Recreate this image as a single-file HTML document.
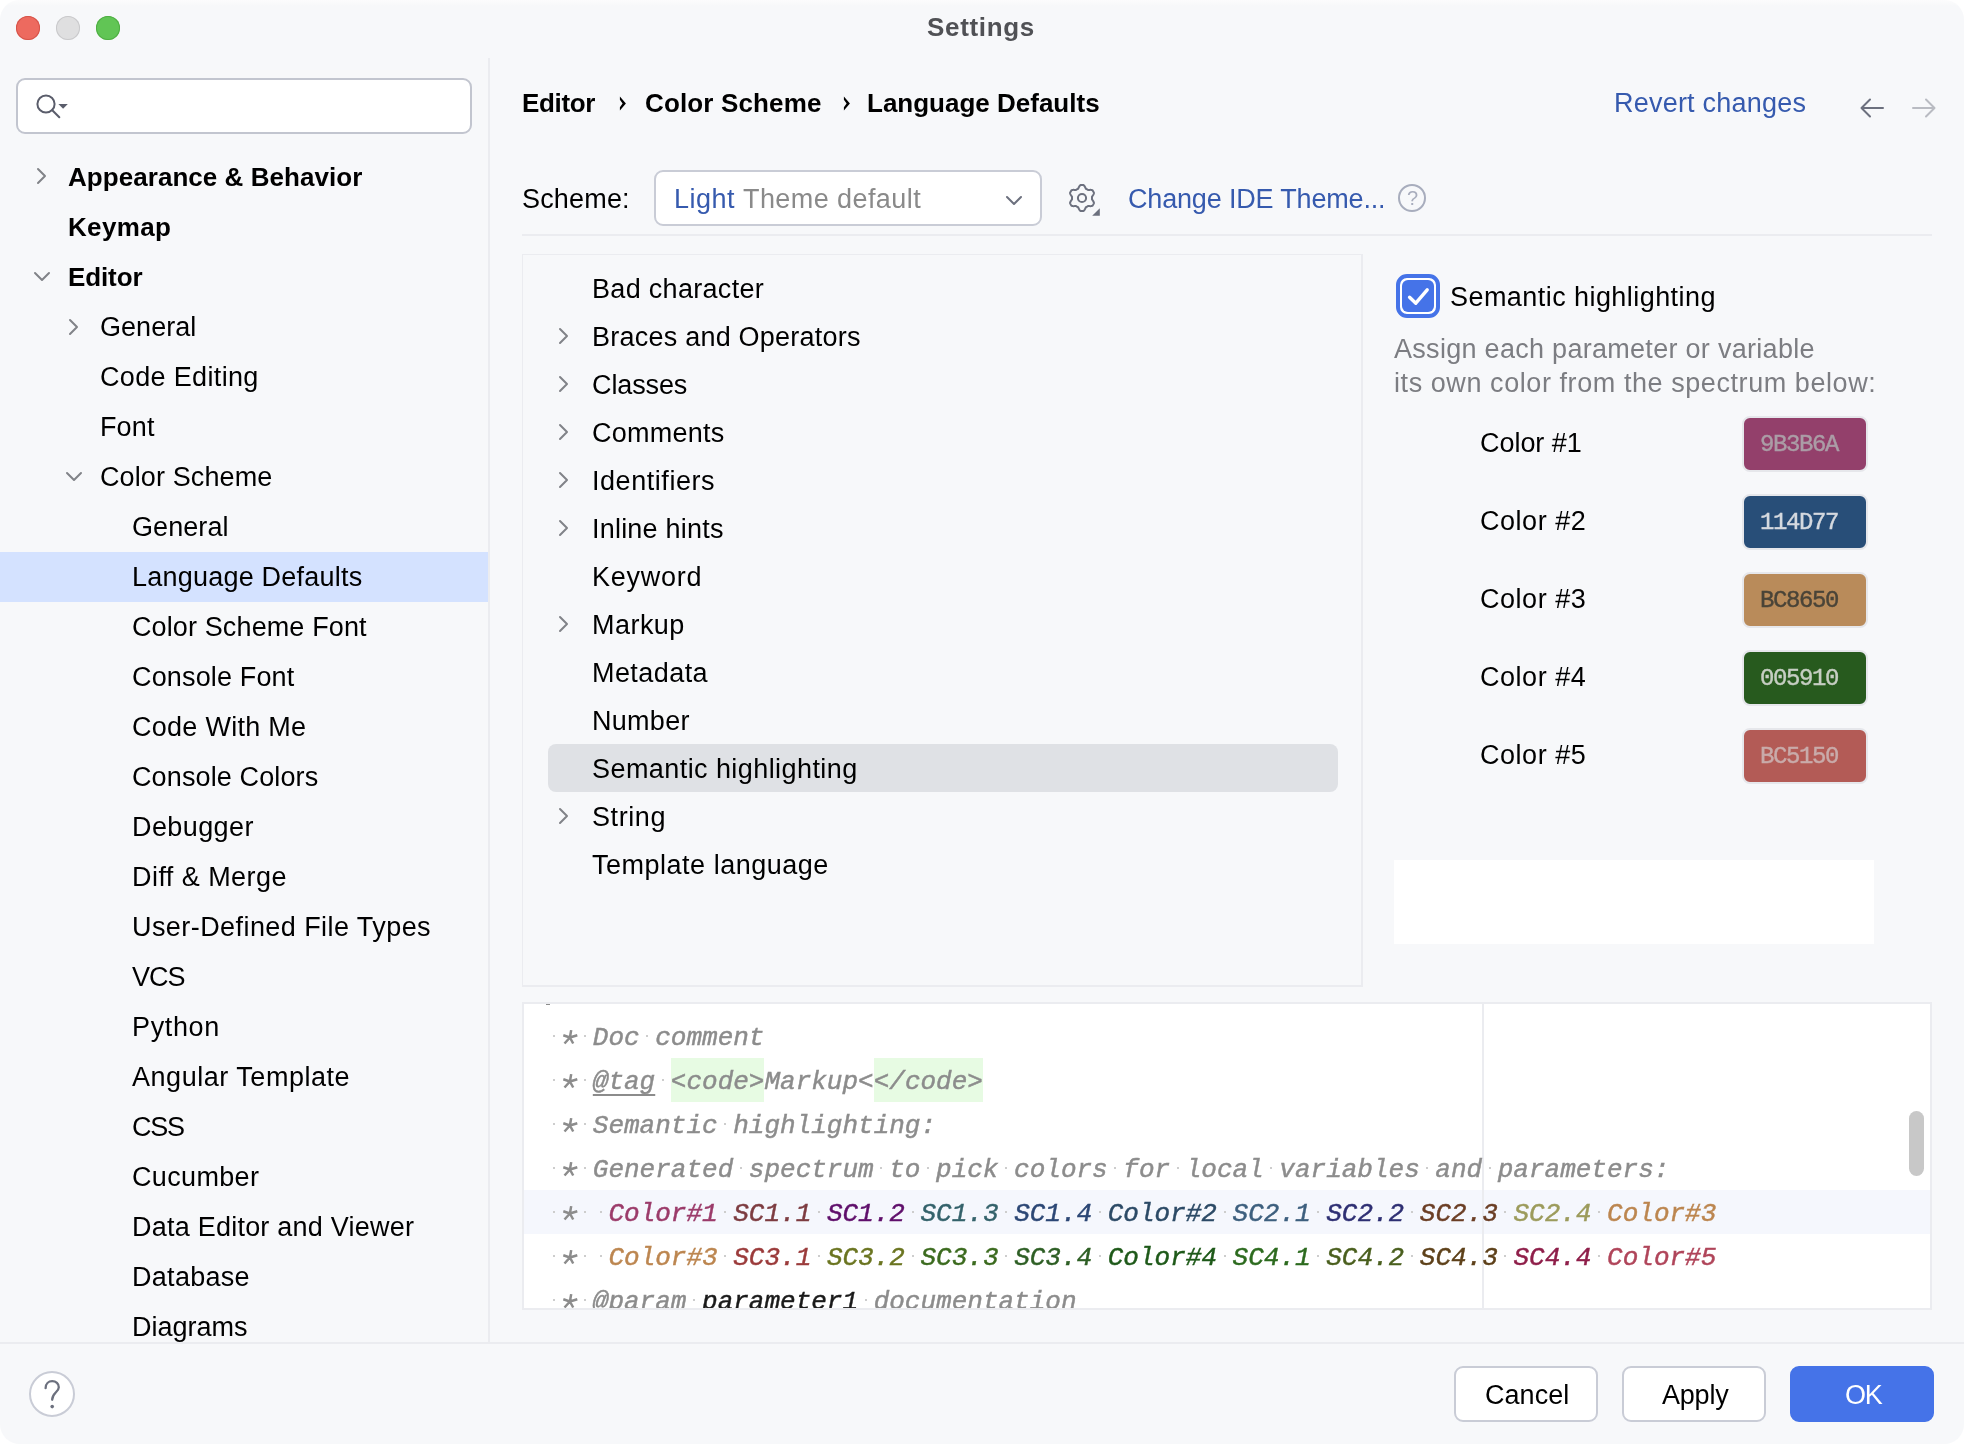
<!DOCTYPE html><html><head><meta charset='utf-8'><title>Settings</title><style>
html,body{margin:0;padding:0;background:#fff;}
body{width:1964px;height:1444px;overflow:hidden;position:relative;font-family:"Liberation Sans", sans-serif;}
#win{position:absolute;left:0;top:0;width:1964px;height:1444px;background:linear-gradient(#FCFCFD 0px,#F7F8FA 6px) #F7F8FA;border-radius:20px;overflow:hidden;}
.a{position:absolute;}
.t{position:absolute;white-space:pre;will-change:transform;line-height:32px;font-family:"Liberation Sans", sans-serif;color:#000;}
.hl{background:#EBECF0;}
svg{position:absolute;overflow:visible;}
.btn{position:absolute;box-sizing:border-box;height:56px;width:144px;top:1366px;border:2px solid #C9CCD6;border-radius:9px;background:#fff;}
.sw{position:absolute;box-sizing:border-box;left:1742px;width:126px;height:56px;border:2px solid #E6E7EB;border-radius:8px;}
.sw span{will-change:transform;position:absolute;left:15.5px;top:1px;line-height:52px;font-family:"Liberation Mono", monospace;font-size:24px;white-space:pre;letter-spacing:-1.4px;-webkit-text-stroke:0.4px currentColor;}
#code{position:absolute;left:524px;top:1004px;width:1406px;height:304px;overflow:hidden;background:#fff;}
.ln{will-change:transform;position:absolute;left:22px;height:44px;line-height:48px;-webkit-text-stroke:0.45px currentColor;white-space:pre;font-family:"Liberation Mono", monospace;font-style:italic;font-size:26px;color:#8C8C8C;}
.ws{position:absolute;width:2px;height:2px;background:#CDCDCD;}
</style></head><body><div id='win'>
<div class='a' style='left:16px;top:16px;width:24px;height:24px;border-radius:50%;background:#ED6A5F;box-shadow:inset 0 0 0 1px #D5544A'></div>
<div class='a' style='left:56px;top:16px;width:24px;height:24px;border-radius:50%;background:#DFDFE0;box-shadow:inset 0 0 0 1px #C9C9CB'></div>
<div class='a' style='left:96px;top:16px;width:24px;height:24px;border-radius:50%;background:#61C555;box-shadow:inset 0 0 0 1px #4FAE43'></div>
<div class='a' style='left:16px;top:78px;width:456px;height:56px;box-sizing:border-box;border:2px solid #C2C5CF;border-radius:9px;background:#fff'></div>
<svg style='left:34px;top:92px' width='36' height='28' viewBox='34 92 36 28'><circle cx='46' cy='104' r='8.6' fill='none' stroke='#5A5D6B' stroke-width='2'/><path d='M52.3 110.3 L59.3 117.3' stroke='#5A5D6B' stroke-width='2' stroke-linecap='round'/><path d='M58.4 104 L67.8 104 L63.1 108.8 Z' fill='#5A5D6B'/></svg>
<div class='a' style='left:0;top:552px;width:488px;height:50px;background:#D4E2FF'></div>
<div class='a hl' style='left:488px;top:58px;width:2px;height:1284px'></div>
<svg class='a' style='left:37.0px;top:168.0px' width='9' height='16' viewBox='0 0 9 16'><path d='M1 1 L8 8 L1 15' fill='none' stroke='#818388' stroke-width='2' stroke-linecap='round' stroke-linejoin='round'/></svg>
<svg class='a' style='left:34.0px;top:271.5px' width='16' height='9' viewBox='0 0 16 9'><path d='M1 1 L8 8 L15 1' fill='none' stroke='#818388' stroke-width='2' stroke-linecap='round' stroke-linejoin='round'/></svg>
<svg class='a' style='left:69.0px;top:318.5px' width='9' height='16' viewBox='0 0 9 16'><path d='M1 1 L8 8 L1 15' fill='none' stroke='#818388' stroke-width='2' stroke-linecap='round' stroke-linejoin='round'/></svg>
<svg class='a' style='left:66.0px;top:471.5px' width='16' height='9' viewBox='0 0 16 9'><path d='M1 1 L8 8 L15 1' fill='none' stroke='#818388' stroke-width='2' stroke-linecap='round' stroke-linejoin='round'/></svg>
<svg style='left:610px;top:90px' width='24' height='28' viewBox='610 90 24 28'><path d='M619.9 96.4 L625.9 103.5 L619.9 110.6 L619.9 107.3 L622.6 103.5 L619.9 99.7 Z' fill='#000'/></svg>
<svg style='left:834px;top:90px' width='24' height='28' viewBox='834 90 24 28'><path d='M843.9 96.4 L849.9 103.5 L843.9 110.6 L843.9 107.3 L846.6 103.5 L843.9 99.7 Z' fill='#000'/></svg>
<svg style='left:1860px;top:98px' width='24' height='20' viewBox='0 0 24 20'><path d='M23 10 H2 M10 1.5 L1.5 10 L10 18.5' fill='none' stroke='#6C707E' stroke-width='2' stroke-linecap='round' stroke-linejoin='round'/></svg>
<svg style='left:1912px;top:98px' width='24' height='20' viewBox='0 0 24 20'><path d='M1 10 H22 M14 1.5 L22.5 10 L14 18.5' fill='none' stroke='#B9BBC2' stroke-width='2' stroke-linecap='round' stroke-linejoin='round'/></svg>
<div class='a' style='left:654px;top:170px;width:388px;height:56px;box-sizing:border-box;border:2px solid #C9CCD6;border-radius:9px;background:#fff'></div>
<svg class='a' style='left:1006.0px;top:196.0px' width='16' height='9' viewBox='0 0 16 9'><path d='M1 1 L8 8 L15 1' fill='none' stroke='#6C707E' stroke-width='2' stroke-linecap='round' stroke-linejoin='round'/></svg>
<svg style='left:1066px;top:182px' width='36' height='36' viewBox='1066 182 36 36'><path d='M1092.00 198.00 L1092.00 198.26 L1091.99 198.52 L1091.97 198.78 L1091.95 199.05 L1091.98 199.31 L1092.18 199.61 L1092.40 199.93 L1092.64 200.26 L1092.87 200.61 L1093.11 200.98 L1093.33 201.36 L1093.53 201.75 L1093.71 202.15 L1093.85 202.55 L1093.95 202.95 L1093.88 203.29 L1093.73 203.60 L1093.58 203.90 L1093.42 204.20 L1093.26 204.50 L1093.08 204.79 L1092.90 205.08 L1092.71 205.36 L1092.52 205.64 L1092.26 205.87 L1091.86 205.99 L1091.44 206.07 L1091.01 206.11 L1090.57 206.13 L1090.13 206.13 L1089.70 206.11 L1089.28 206.08 L1088.87 206.05 L1088.49 206.01 L1088.13 205.99 L1087.88 206.09 L1087.66 206.24 L1087.45 206.39 L1087.22 206.53 L1087.00 206.66 L1086.77 206.79 L1086.54 206.91 L1086.31 207.03 L1086.07 207.14 L1085.85 207.30 L1085.69 207.62 L1085.53 207.97 L1085.36 208.34 L1085.18 208.72 L1084.98 209.11 L1084.76 209.49 L1084.52 209.86 L1084.26 210.21 L1083.99 210.53 L1083.69 210.82 L1083.36 210.93 L1083.02 210.96 L1082.68 210.98 L1082.34 211.00 L1082.00 211.00 L1081.66 211.00 L1081.32 210.98 L1080.98 210.96 L1080.64 210.93 L1080.31 210.82 L1080.01 210.53 L1079.74 210.21 L1079.48 209.86 L1079.24 209.49 L1079.02 209.11 L1078.82 208.72 L1078.64 208.34 L1078.47 207.97 L1078.31 207.62 L1078.15 207.30 L1077.93 207.14 L1077.69 207.03 L1077.46 206.91 L1077.23 206.79 L1077.00 206.66 L1076.78 206.53 L1076.55 206.39 L1076.34 206.24 L1076.12 206.09 L1075.87 205.99 L1075.51 206.01 L1075.13 206.05 L1074.72 206.08 L1074.30 206.11 L1073.87 206.13 L1073.43 206.13 L1072.99 206.11 L1072.56 206.07 L1072.14 205.99 L1071.74 205.87 L1071.48 205.64 L1071.29 205.36 L1071.10 205.08 L1070.92 204.79 L1070.74 204.50 L1070.58 204.20 L1070.42 203.90 L1070.27 203.60 L1070.12 203.29 L1070.05 202.95 L1070.15 202.55 L1070.29 202.15 L1070.47 201.75 L1070.67 201.36 L1070.89 200.98 L1071.13 200.61 L1071.36 200.26 L1071.60 199.93 L1071.82 199.61 L1072.02 199.31 L1072.05 199.05 L1072.03 198.78 L1072.01 198.52 L1072.00 198.26 L1072.00 198.00 L1072.00 197.74 L1072.01 197.48 L1072.03 197.22 L1072.05 196.95 L1072.02 196.69 L1071.82 196.39 L1071.60 196.07 L1071.36 195.74 L1071.13 195.39 L1070.89 195.02 L1070.67 194.64 L1070.47 194.25 L1070.29 193.85 L1070.15 193.45 L1070.05 193.05 L1070.12 192.71 L1070.27 192.40 L1070.42 192.10 L1070.58 191.80 L1070.74 191.50 L1070.92 191.21 L1071.10 190.92 L1071.29 190.64 L1071.48 190.36 L1071.74 190.13 L1072.14 190.01 L1072.56 189.93 L1072.99 189.89 L1073.43 189.87 L1073.87 189.87 L1074.30 189.89 L1074.72 189.92 L1075.13 189.95 L1075.51 189.99 L1075.87 190.01 L1076.12 189.91 L1076.34 189.76 L1076.55 189.61 L1076.78 189.47 L1077.00 189.34 L1077.23 189.21 L1077.46 189.09 L1077.69 188.97 L1077.93 188.86 L1078.15 188.70 L1078.31 188.38 L1078.47 188.03 L1078.64 187.66 L1078.82 187.28 L1079.02 186.89 L1079.24 186.51 L1079.48 186.14 L1079.74 185.79 L1080.01 185.47 L1080.31 185.18 L1080.64 185.07 L1080.98 185.04 L1081.32 185.02 L1081.66 185.00 L1082.00 185.00 L1082.34 185.00 L1082.68 185.02 L1083.02 185.04 L1083.36 185.07 L1083.69 185.18 L1083.99 185.47 L1084.26 185.79 L1084.52 186.14 L1084.76 186.51 L1084.98 186.89 L1085.18 187.28 L1085.36 187.66 L1085.53 188.03 L1085.69 188.38 L1085.85 188.70 L1086.07 188.86 L1086.31 188.97 L1086.54 189.09 L1086.77 189.21 L1087.00 189.34 L1087.22 189.47 L1087.45 189.61 L1087.66 189.76 L1087.88 189.91 L1088.13 190.01 L1088.49 189.99 L1088.87 189.95 L1089.28 189.92 L1089.70 189.89 L1090.13 189.87 L1090.57 189.87 L1091.01 189.89 L1091.44 189.93 L1091.86 190.01 L1092.26 190.13 L1092.52 190.36 L1092.71 190.64 L1092.90 190.92 L1093.08 191.21 L1093.26 191.50 L1093.42 191.80 L1093.58 192.10 L1093.73 192.40 L1093.88 192.71 L1093.95 193.05 L1093.85 193.45 L1093.71 193.85 L1093.53 194.25 L1093.33 194.64 L1093.11 195.02 L1092.87 195.39 L1092.64 195.74 L1092.40 196.07 L1092.18 196.39 L1091.98 196.69 L1091.95 196.95 L1091.97 197.22 L1091.99 197.48 L1092.00 197.74 Z' fill='none' stroke='#6C707E' stroke-width='2' stroke-linejoin='round'/><circle cx='1082' cy='198' r='4.1' fill='none' stroke='#6C707E' stroke-width='2'/><path d='M1099.8 208.2 L1099.8 215.8 L1092.2 215.8 Z' fill='#6C707E'/></svg>
<div class='a' style='left:1398px;top:184px;width:28px;height:28px;box-sizing:border-box;border:2px solid #A8ADBD;border-radius:50%'></div>
<span class='t' style='left:1406.5px;top:183px;font-size:20px;color:#A8ADBD;line-height:30px'>?</span>
<div class='a hl' style='left:522px;top:234px;width:1410px;height:2px'></div>
<div class='a' style='left:522px;top:254px;width:841px;height:733px;box-sizing:border-box;border:solid #EBECF0;border-width:1px 2px 2px 1px'></div>
<div class='a' style='left:548px;top:744px;width:790px;height:48px;border-radius:8px;background:#DFE1E5'></div>
<svg class='a' style='left:559.0px;top:328.0px' width='9' height='16' viewBox='0 0 9 16'><path d='M1 1 L8 8 L1 15' fill='none' stroke='#818388' stroke-width='2' stroke-linecap='round' stroke-linejoin='round'/></svg>
<svg class='a' style='left:559.0px;top:376.0px' width='9' height='16' viewBox='0 0 9 16'><path d='M1 1 L8 8 L1 15' fill='none' stroke='#818388' stroke-width='2' stroke-linecap='round' stroke-linejoin='round'/></svg>
<svg class='a' style='left:559.0px;top:424.0px' width='9' height='16' viewBox='0 0 9 16'><path d='M1 1 L8 8 L1 15' fill='none' stroke='#818388' stroke-width='2' stroke-linecap='round' stroke-linejoin='round'/></svg>
<svg class='a' style='left:559.0px;top:472.0px' width='9' height='16' viewBox='0 0 9 16'><path d='M1 1 L8 8 L1 15' fill='none' stroke='#818388' stroke-width='2' stroke-linecap='round' stroke-linejoin='round'/></svg>
<svg class='a' style='left:559.0px;top:520.0px' width='9' height='16' viewBox='0 0 9 16'><path d='M1 1 L8 8 L1 15' fill='none' stroke='#818388' stroke-width='2' stroke-linecap='round' stroke-linejoin='round'/></svg>
<svg class='a' style='left:559.0px;top:616.0px' width='9' height='16' viewBox='0 0 9 16'><path d='M1 1 L8 8 L1 15' fill='none' stroke='#818388' stroke-width='2' stroke-linecap='round' stroke-linejoin='round'/></svg>
<svg class='a' style='left:559.0px;top:808.0px' width='9' height='16' viewBox='0 0 9 16'><path d='M1 1 L8 8 L1 15' fill='none' stroke='#818388' stroke-width='2' stroke-linecap='round' stroke-linejoin='round'/></svg>
<div class='a' style='left:1396px;top:274px;width:44px;height:44px;box-sizing:border-box;border:4px solid #4573E8;border-radius:11px;background:#fff'></div>
<div class='a' style='left:1402px;top:280px;width:32px;height:32px;border-radius:6px;background:#4573E8'></div>
<svg style='left:1402px;top:280px' width='32' height='32' viewBox='1402 280 32 32'><path d='M1409.6 297.2 L1415.8 303.2 L1427.2 289.8' fill='none' stroke='#fff' stroke-width='3.4' stroke-linecap='round' stroke-linejoin='round'/></svg>
<div class='sw' style='top:416px;background:#93406B'><span style='color:#AB9DA6'>9B3B6A</span></div>
<div class='sw' style='top:494px;background:#284E78'><span style='color:#D5D9DF'>114D77</span></div>
<div class='sw' style='top:572px;background:#B98B5A'><span style='color:#4A4438'>BC8650</span></div>
<div class='sw' style='top:650px;background:#275A1E'><span style='color:#C6CEC3'>005910</span></div>
<div class='sw' style='top:728px;background:#B35B56'><span style='color:#C9ABAA'>BC5150</span></div>
<div class='a' style='left:1394px;top:860px;width:480px;height:84px;background:#fff'></div>
<div class='a' style='left:522px;top:1002px;width:1410px;height:308px;box-sizing:border-box;border:2px solid #EBECF0;background:#fff'></div>
<div id='code'><div class='a' style='left:0;top:186px;width:1406px;height:44px;background:#F5F7FD'></div>
<div class='a' style='left:958px;top:0;width:2px;height:304px;background:#EBECF0'></div>
<div class='ws' style='left:28.8px;top:31px'></div>
<div class='ws' style='left:60.0px;top:31px'></div>
<div class='ws' style='left:122.4px;top:31px'></div>
<div class='ln' style='top:10px'>   Doc comment</div>
<div class='ws' style='left:28.8px;top:75px'></div>
<div class='ws' style='left:60.0px;top:75px'></div>
<div class='ws' style='left:138.0px;top:75px'></div>
<div class='a' style='left:146.8px;top:54px;width:93.6px;height:44px;background:#E7FBE3'></div>
<div class='a' style='left:349.6px;top:54px;width:109.2px;height:44px;background:#E7FBE3'></div>
<div class='ln' style='top:54px'>   <span style='text-decoration:underline;text-decoration-thickness:2px;text-underline-offset:5px;'>@tag</span> &lt;code&gt;Markup&lt;&lt;/code&gt;</div>
<div class='ws' style='left:28.8px;top:119px'></div>
<div class='ws' style='left:60.0px;top:119px'></div>
<div class='ws' style='left:200.4px;top:119px'></div>
<div class='ln' style='top:98px'>   Semantic highlighting:</div>
<div class='ws' style='left:28.8px;top:163px'></div>
<div class='ws' style='left:60.0px;top:163px'></div>
<div class='ws' style='left:216.0px;top:163px'></div>
<div class='ws' style='left:356.4px;top:163px'></div>
<div class='ws' style='left:403.2px;top:163px'></div>
<div class='ws' style='left:481.2px;top:163px'></div>
<div class='ws' style='left:590.4px;top:163px'></div>
<div class='ws' style='left:652.8px;top:163px'></div>
<div class='ws' style='left:746.4px;top:163px'></div>
<div class='ws' style='left:902.4px;top:163px'></div>
<div class='ws' style='left:964.8px;top:163px'></div>
<div class='ln' style='top:142px'>   Generated spectrum to pick colors for local variables and parameters:</div>
<div class='ws' style='left:28.8px;top:207px'></div>
<div class='ws' style='left:60.0px;top:207px'></div>
<div class='ws' style='left:75.6px;top:207px'></div>
<div class='ws' style='left:200.4px;top:207px'></div>
<div class='ws' style='left:294.0px;top:207px'></div>
<div class='ws' style='left:387.6px;top:207px'></div>
<div class='ws' style='left:481.2px;top:207px'></div>
<div class='ws' style='left:574.8px;top:207px'></div>
<div class='ws' style='left:699.6px;top:207px'></div>
<div class='ws' style='left:793.2px;top:207px'></div>
<div class='ws' style='left:886.8px;top:207px'></div>
<div class='ws' style='left:980.4px;top:207px'></div>
<div class='ws' style='left:1074.0px;top:207px'></div>
<div class='ln' style='top:186px'>    <span style='color:#9B3B6A;'>Color#1</span> <span style='color:#7D3C41;'>SC1.1</span> <span style='color:#5F0F6B;'>SC1.2</span> <span style='color:#34626B;'>SC1.3</span> <span style='color:#2C4775;'>SC1.4</span> <span style='color:#2C4A66;'>Color#2</span> <span style='color:#3D5F7E;'>SC2.1</span> <span style='color:#2E2F73;'>SC2.2</span> <span style='color:#6B3E25;'>SC2.3</span> <span style='color:#9C9B5C;'>SC2.4</span> <span style='color:#BC8650;'>Color#3</span></div>
<div class='ws' style='left:28.8px;top:251px'></div>
<div class='ws' style='left:60.0px;top:251px'></div>
<div class='ws' style='left:75.6px;top:251px'></div>
<div class='ws' style='left:200.4px;top:251px'></div>
<div class='ws' style='left:294.0px;top:251px'></div>
<div class='ws' style='left:387.6px;top:251px'></div>
<div class='ws' style='left:481.2px;top:251px'></div>
<div class='ws' style='left:574.8px;top:251px'></div>
<div class='ws' style='left:699.6px;top:251px'></div>
<div class='ws' style='left:793.2px;top:251px'></div>
<div class='ws' style='left:886.8px;top:251px'></div>
<div class='ws' style='left:980.4px;top:251px'></div>
<div class='ws' style='left:1074.0px;top:251px'></div>
<div class='ln' style='top:230px'>    <span style='color:#BC8650;'>Color#3</span> <span style='color:#9B3B3B;'>SC3.1</span> <span style='color:#6B7521;'>SC3.2</span> <span style='color:#3C6B1F;'>SC3.3</span> <span style='color:#2E5F25;'>SC3.4</span> <span style='color:#1E5919;'>Color#4</span> <span style='color:#2D6B1F;'>SC4.1</span> <span style='color:#4A5F1E;'>SC4.2</span> <span style='color:#5E411A;'>SC4.3</span> <span style='color:#8F1F4A;'>SC4.4</span> <span style='color:#B0455A;'>Color#5</span></div>
<div class='ws' style='left:28.8px;top:295px'></div>
<div class='ws' style='left:60.0px;top:295px'></div>
<div class='ws' style='left:169.2px;top:295px'></div>
<div class='ws' style='left:340.8px;top:295px'></div>
<div class='ln' style='top:274px'>   @param <span style='color:#1A1A1A;'>parameter1</span> documentation</div>
<svg style='left:0;top:0' width='1406' height='304' viewBox='0 0 1406 304'><path d='M45.9 33.5L47.2 26.1M45.9 33.5L53.3 31.2M45.9 33.5L49.2 39.5M45.9 33.5L40.5 39.5M45.9 33.5L39.3 31.2M45.9 77.5L47.2 70.1M45.9 77.5L53.3 75.2M45.9 77.5L49.2 83.5M45.9 77.5L40.5 83.5M45.9 77.5L39.3 75.2M45.9 121.5L47.2 114.1M45.9 121.5L53.3 119.2M45.9 121.5L49.2 127.5M45.9 121.5L40.5 127.5M45.9 121.5L39.3 119.2M45.9 165.5L47.2 158.1M45.9 165.5L53.3 163.2M45.9 165.5L49.2 171.5M45.9 165.5L40.5 171.5M45.9 165.5L39.3 163.2M45.9 209.5L47.2 202.1M45.9 209.5L53.3 207.2M45.9 209.5L49.2 215.5M45.9 209.5L40.5 215.5M45.9 209.5L39.3 207.2M45.9 253.5L47.2 246.1M45.9 253.5L53.3 251.2M45.9 253.5L49.2 259.5M45.9 253.5L40.5 259.5M45.9 253.5L39.3 251.2M45.9 297.5L47.2 290.1M45.9 297.5L53.3 295.2M45.9 297.5L49.2 303.5M45.9 297.5L40.5 303.5M45.9 297.5L39.3 295.2' stroke='#8C8C8C' stroke-width='2.5' fill='none'/></svg>
<div class='a' style='left:22px;top:0px;width:4px;height:1px;background:#8c8c8c'></div>
<div class='a' style='left:1385px;top:107px;width:15px;height:65px;border-radius:8px;background:#C8C8C8'></div></div>
<div class='a hl' style='left:0;top:1342px;width:1964px;height:2px'></div>
<div class='a' style='left:0;top:1344px;width:488px;height:20px;background:#F7F8FA'></div>
<div class='a' style='left:29px;top:1371px;width:46px;height:46px;box-sizing:border-box;border:2px solid #C9CCD6;border-radius:50%;background:#fff'></div>
<svg style='left:29px;top:1371px' width='46' height='46' viewBox='29 1371 46 46'><path d='M45.6 1388.2 C45.6 1383.6 48.6 1381.2 52.2 1381.2 C56 1381.2 58.8 1383.8 58.8 1387.2 C58.8 1392 52.2 1393 52.2 1399.8' fill='none' stroke='#6C707E' stroke-width='2.3' stroke-linecap='round'/><circle cx='52.2' cy='1406.6' r='1.8' fill='#6C707E'/></svg>
<div class='btn' style='left:1454px'></div><div class='btn' style='left:1622px'></div>
<div class='btn' style='left:1790px;border-color:#4573E8;background:#4573E8'></div>
<span class='t' style='left:927px;top:11.0px;font-size:26px;letter-spacing:0.67px;font-weight:bold;color:#505155;'>Settings</span>
<span class='t' style='left:68px;top:161.0px;font-size:26px;letter-spacing:0.05px;font-weight:bold;'>Appearance &amp; Behavior</span>
<span class='t' style='left:68px;top:211.0px;font-size:26px;letter-spacing:0.34px;font-weight:bold;'>Keymap</span>
<span class='t' style='left:68px;top:261.0px;font-size:26px;letter-spacing:-0.12px;font-weight:bold;'>Editor</span>
<span class='t' style='left:100px;top:310.6px;font-size:27px;letter-spacing:0.05px;'>General</span>
<span class='t' style='left:100px;top:360.6px;font-size:27px;letter-spacing:0.34px;'>Code Editing</span>
<span class='t' style='left:100px;top:410.6px;font-size:27px;letter-spacing:0.13px;'>Font</span>
<span class='t' style='left:100px;top:460.6px;font-size:27px;letter-spacing:0.11px;'>Color Scheme</span>
<span class='t' style='left:132px;top:510.6px;font-size:27px;letter-spacing:0.08px;'>General</span>
<span class='t' style='left:132px;top:560.6px;font-size:27px;letter-spacing:0.22px;'>Language Defaults</span>
<span class='t' style='left:132px;top:610.6px;font-size:27px;letter-spacing:0.12px;'>Color Scheme Font</span>
<span class='t' style='left:132px;top:660.6px;font-size:27px;letter-spacing:0.15px;'>Console Font</span>
<span class='t' style='left:132px;top:710.6px;font-size:27px;letter-spacing:0.28px;'>Code With Me</span>
<span class='t' style='left:132px;top:760.6px;font-size:27px;letter-spacing:0.12px;'>Console Colors</span>
<span class='t' style='left:132px;top:810.6px;font-size:27px;letter-spacing:0.40px;'>Debugger</span>
<span class='t' style='left:132px;top:860.6px;font-size:27px;letter-spacing:0.45px;'>Diff &amp; Merge</span>
<span class='t' style='left:132px;top:910.6px;font-size:27px;letter-spacing:0.43px;'>User-Defined File Types</span>
<span class='t' style='left:132px;top:960.6px;font-size:27px;letter-spacing:-1.05px;'>VCS</span>
<span class='t' style='left:132px;top:1010.6px;font-size:27px;letter-spacing:0.64px;'>Python</span>
<span class='t' style='left:132px;top:1060.6px;font-size:27px;letter-spacing:0.53px;'>Angular Template</span>
<span class='t' style='left:132px;top:1110.6px;font-size:27px;letter-spacing:-1.20px;'>CSS</span>
<span class='t' style='left:132px;top:1160.6px;font-size:27px;letter-spacing:0.34px;'>Cucumber</span>
<span class='t' style='left:132px;top:1210.6px;font-size:27px;letter-spacing:0.23px;'>Data Editor and Viewer</span>
<span class='t' style='left:132px;top:1260.6px;font-size:27px;letter-spacing:0.29px;'>Database</span>
<span class='t' style='left:132px;top:1310.6px;font-size:27px;letter-spacing:-0.01px;'>Diagrams</span>
<span class='t' style='left:522px;top:86.5px;font-size:26px;letter-spacing:-0.34px;font-weight:bold;'>Editor</span>
<span class='t' style='left:645px;top:86.5px;font-size:26px;letter-spacing:0.14px;font-weight:bold;'>Color Scheme</span>
<span class='t' style='left:867px;top:86.5px;font-size:26px;letter-spacing:0.00px;font-weight:bold;'>Language Defaults</span>
<span class='t' style='left:1614px;top:87.0px;font-size:27px;letter-spacing:0.22px;color:#365AAE;'>Revert changes</span>
<span class='t' style='left:522px;top:183.0px;font-size:27px;letter-spacing:0.17px;'>Scheme:</span>
<span class='t' style='left:674px;top:183.0px;font-size:27px;letter-spacing:0.48px;color:#365AAE;'>Light</span>
<span class='t' style='left:743px;top:183.0px;font-size:27px;letter-spacing:0.42px;color:#8A8A8A;'>Theme default</span>
<span class='t' style='left:1128px;top:183.0px;font-size:27px;letter-spacing:-0.17px;color:#365AAE;'>Change IDE Theme...</span>
<span class='t' style='left:592px;top:272.6px;font-size:27px;letter-spacing:0.31px;'>Bad character</span>
<span class='t' style='left:592px;top:320.6px;font-size:27px;letter-spacing:0.23px;'>Braces and Operators</span>
<span class='t' style='left:592px;top:368.6px;font-size:27px;letter-spacing:-0.12px;'>Classes</span>
<span class='t' style='left:592px;top:416.6px;font-size:27px;letter-spacing:0.24px;'>Comments</span>
<span class='t' style='left:592px;top:464.6px;font-size:27px;letter-spacing:0.55px;'>Identifiers</span>
<span class='t' style='left:592px;top:512.6px;font-size:27px;letter-spacing:0.21px;'>Inline hints</span>
<span class='t' style='left:592px;top:560.6px;font-size:27px;letter-spacing:0.73px;'>Keyword</span>
<span class='t' style='left:592px;top:608.6px;font-size:27px;letter-spacing:0.46px;'>Markup</span>
<span class='t' style='left:592px;top:656.6px;font-size:27px;letter-spacing:0.43px;'>Metadata</span>
<span class='t' style='left:592px;top:704.6px;font-size:27px;letter-spacing:0.28px;'>Number</span>
<span class='t' style='left:592px;top:752.6px;font-size:27px;letter-spacing:0.43px;'>Semantic highlighting</span>
<span class='t' style='left:592px;top:800.6px;font-size:27px;letter-spacing:0.58px;'>String</span>
<span class='t' style='left:592px;top:848.6px;font-size:27px;letter-spacing:0.51px;'>Template language</span>
<span class='t' style='left:1450px;top:280.6px;font-size:27px;letter-spacing:0.44px;'>Semantic highlighting</span>
<span class='t' style='left:1394px;top:332.6px;font-size:27px;letter-spacing:0.29px;color:#7C7D82;'>Assign each parameter or variable</span>
<span class='t' style='left:1394px;top:366.6px;font-size:27px;letter-spacing:0.57px;color:#7C7D82;'>its own color from the spectrum below:</span>
<span class='t' style='left:1480px;top:427.1px;font-size:27px;letter-spacing:-0.04px;'>Color #1</span>
<span class='t' style='left:1480px;top:505.1px;font-size:27px;letter-spacing:0.53px;'>Color #2</span>
<span class='t' style='left:1480px;top:583.1px;font-size:27px;letter-spacing:0.53px;'>Color #3</span>
<span class='t' style='left:1480px;top:661.1px;font-size:27px;letter-spacing:0.53px;'>Color #4</span>
<span class='t' style='left:1480px;top:739.1px;font-size:27px;letter-spacing:0.53px;'>Color #5</span>
<span class='t' style='left:1485px;top:1379.0px;font-size:27px;letter-spacing:0.04px;'>Cancel</span>
<span class='t' style='left:1662px;top:1379.0px;font-size:27px;letter-spacing:-0.20px;'>Apply</span>
<span class='t' style='left:1845px;top:1379.0px;font-size:27px;letter-spacing:-1.20px;color:#fff;'>OK</span>
</div></body></html>
